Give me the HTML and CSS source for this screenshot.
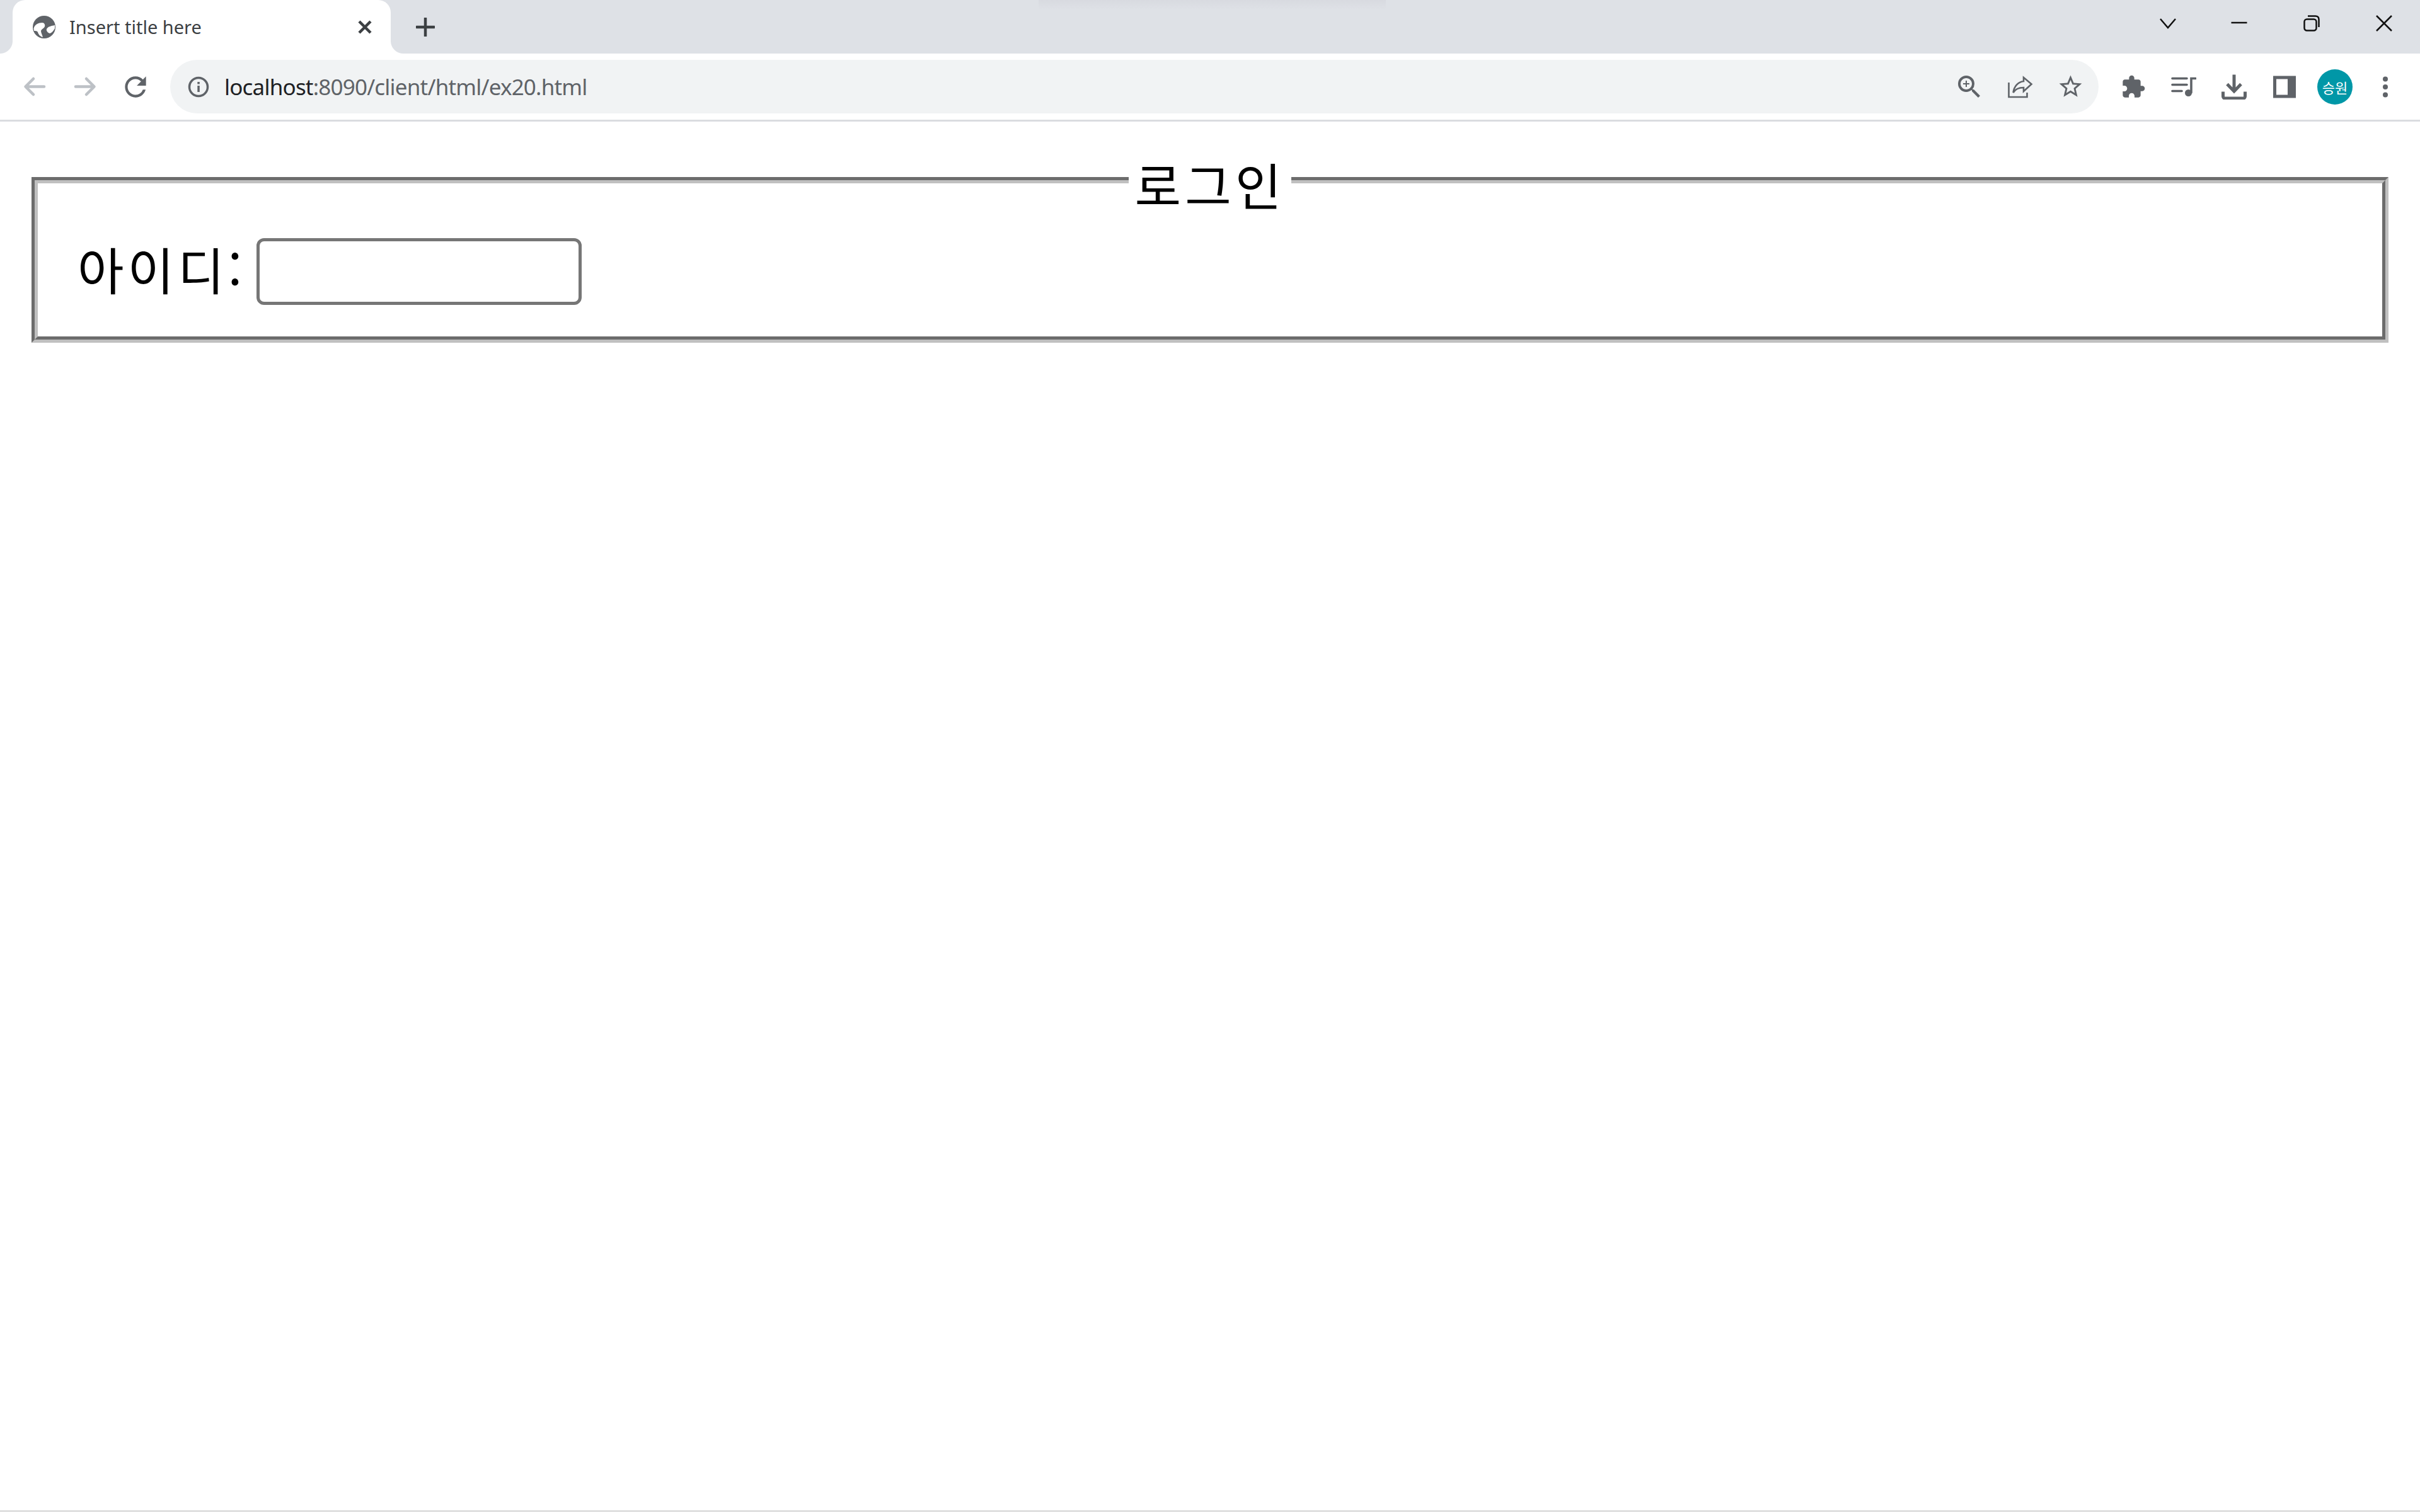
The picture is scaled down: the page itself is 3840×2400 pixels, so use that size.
FILE: index.html
```html
<!DOCTYPE html>
<html lang="ko">
<head>
    <meta charset="UTF-8">
    <meta name="viewport" content="width=device-width, initial-scale=1.0">
    <title>Insert title here</title>
    <link rel="stylesheet" href="styles.css">
</head>
<body>
    <div class="tabstrip">
        <div class="tab">
            <svg class="favicon" viewBox="0 0 36 36">
                <circle cx="18" cy="18" r="18" fill="#5f6368"/>
                <path fill="#fff" d="M1.500 20C3 14 9 11 15 11C18 11 20 14 19 17C18 20 14 21 13 24C13 27 15 30 16 34C12 33 9 30 8 26C7 24 4 24 2 24Z"/>
                <path fill="#fff" d="M35 15C30 16 24 17 22 21C21 24 24 27 27 28C30 27 33 24 35 20Z"/>
            </svg>
            <span class="tab-title">Insert title here</span>
            <svg class="tab-close" viewBox="0 0 24 24"><path d="M3 3L21 21M21 3L3 21"/></svg>
        </div>
        <svg class="new-tab" viewBox="0 0 30 30"><path d="M15 1V29M1 15H29"/></svg>
        <div class="window-controls">
            <div class="win-btn win-chevron"><svg viewBox="0 0 26 26"><path d="M1 6L13 20L25 6"/></svg></div>
            <div class="win-btn"><svg viewBox="0 0 26 26"><path d="M0.5 12H25.5"/></svg></div>
            <div class="win-btn"><svg viewBox="0 0 26 26"><rect x="1.5" y="6.5" width="19" height="18" rx="4"/><path d="M7 1.5H19Q24.500 1.500 24.500 7V19"/></svg></div>
            <div class="win-btn"><svg viewBox="0 0 26 26"><path d="M1 1L25 25M25 1L1 25"/></svg></div>
        </div>
    </div>

    <div class="toolbar">
        <div class="tool-btn"><svg class="icon-line faded" viewBox="0 0 40 40"><path d="M35 19.500H6M18 7L5.500 19.500L18 32"/></svg></div>
        <div class="tool-btn"><svg class="icon-line faded" viewBox="0 0 40 40"><path d="M5 19.500H34M22 7L34.500 19.500L22 32"/></svg></div>
        <div class="tool-btn">
            <svg class="icon-solid size-50" viewBox="0 0 24 24"><path d="M17.650 6.350A7.958 7.958 0 0 0 12 4c-4.420 0-7.990 3.580-7.990 8s3.570 8 7.990 8c3.730 0 6.840-2.550 7.730-6h-2.080A5.990 5.990 0 0 1 12 18c-3.310 0-6-2.690-6-6s2.690-6 6-6c1.660 0 3.140.690 4.220 1.780L13 11h7V4l-2.350 2.350z"/></svg>
        </div>

        <div class="omnibox">
            <svg class="info-icon" viewBox="0 0 36 36">
                <circle cx="18" cy="18" r="14.500" fill="none" stroke="#5f6368" stroke-width="3.500"/>
                <rect x="16.300" y="16" width="3.500" height="10" fill="#5f6368"/>
                <rect x="16.300" y="10" width="3.500" height="3.500" fill="#5f6368"/>
            </svg>
            <div class="url"><span class="url-host">localhost</span>:8090/client/html/ex20.html</div>
            <div class="tool-btn">
                <svg class="icon-solid size-48" viewBox="0 0 24 24"><path d="M15.500 14h-.790l-.280-.270A6.471 6.471 0 0 0 16 9.500 6.500 6.500 0 1 0 9.500 16c1.610 0 3.090-.590 4.230-1.570l.270.280v.790l5 4.990L20.490 19l-4.990-5zm-6 0C7.010 14 5 11.990 5 9.500S7.010 5 9.500 5 14 7.010 14 9.500 11.990 14 9.500 14z"/><path d="M12 10h-2v2H9v-2H7V9h2V7h1v2h2v1z"/></svg>
            </div>
            <div class="tool-btn">
                <svg class="icon-line thin" viewBox="0 0 42 40"><path d="M3.500 13V36H32.500V29"/><path d="M27 5L39.500 15.500L27 27V21C19 21 14 23 10.500 29C12 19 18 12 27 11Z"/></svg>
            </div>
            <div class="tool-btn">
                <svg class="icon-solid size-43" viewBox="0 0 24 24"><path d="M22 9.240l-7.190-.620L12 2 9.190 8.630 2 9.240l5.460 4.730L5.820 21 12 17.270 18.180 21l-1.630-7.030L22 9.240zM12 15.400l-3.760 2.270 1-4.280-3.320-2.880 4.380-.380L12 6.100l1.710 4.040 4.380.380-3.320 2.880 1 4.280L12 15.400z"/></svg>
            </div>
        </div>

        <div class="toolbar-right">
            <div class="tool-btn">
                <svg class="icon-solid size-40" viewBox="0 0 24 24"><path d="M20.500 11H19V7c0-1.100-.9-2-2-2h-4V3.500C13 2.120 11.880 1 10.500 1S8 2.120 8 3.500V5H4c-1.100 0-1.990.9-1.990 2v3.800H3.500c1.490 0 2.700 1.210 2.700 2.700s-1.210 2.700-2.700 2.700H2V20c0 1.100.9 2 2 2h3.800v-1.500c0-1.490 1.210-2.700 2.700-2.700 1.490 0 2.700 1.210 2.700 2.700V22H17c1.100 0 2-.9 2-2v-4h1.500c1.380 0 2.500-1.120 2.500-2.500S21.880 11 20.500 11z"/></svg>
            </div>
            <div class="tool-btn">
                <svg class="icon-line medium" viewBox="0 0 40 40">
                    <path d="M2 6.500H25M2 16.500H25M2 26.500H17"/>
                    <path d="M32 29V6.500H39"/>
                    <circle class="dot" cx="27.500" cy="29.500" r="5.500"/>
                </svg>
            </div>
            <div class="tool-btn">
                <svg class="icon-line bold" viewBox="0 0 40 40">
                    <path d="M20 0.500V26M9 15.500L20 27L31 15.500"/>
                    <path d="M2.500 27.500V35A3 3 0 0 0 5.500 38H34.500A3 3 0 0 0 37.500 35V27.500"/>
                </svg>
            </div>
            <div class="tool-btn">
                <svg class="icon-solid size-40" viewBox="0 0 40 40"><path fill-rule="evenodd" d="M2 2.500H38V37.500H2ZM7 7.500V32.500H25V7.500Z"/></svg>
            </div>
            <div class="tool-btn"><div class="avatar">승원</div></div>
            <div class="tool-btn">
                <svg class="icon-solid size-40" viewBox="0 0 40 40"><circle cx="20" cy="7.500" r="4"/><circle cx="20" cy="20" r="4"/><circle cx="20" cy="32.500" r="4"/></svg>
            </div>
        </div>
    </div>

    <div class="page">
        <fieldset class="login-box">
            <legend class="login-title">로그인</legend>
            <div class="login-row">
                <label class="login-label" for="userId">아이디:</label>
                <input class="login-input" id="userId" type="text">
            </div>
        </fieldset>
    </div>
</body>
</html>
```

FILE: styles.css
```css
html, body {
    height: 100%;
}
body {
    margin: 0;
    display: flex;
    flex-direction: column;
    background-color: #FFFFFF;
    color: #000;
    font-family: "Noto Sans", "Noto Sans CJK KR", sans-serif;
}

/* tab strip */
.tabstrip {
    display: flex;
    align-items: center;
    height: 85px;
    flex-shrink: 0;
    background: linear-gradient(#d8dae0, #dee1e6) 1648px 0 / 551px 15px no-repeat, #dee1e6;
}
.tab {
    position: relative;
    display: flex;
    align-items: center;
    box-sizing: border-box;
    width: 600px;
    height: 85px;
    margin-left: 20px;
    padding: 0 29px 0 32px;
    background-color: #FFF;
    border-radius: 20px 20px 0 0;
}
.tab::before, .tab::after {
    content: "";
    position: absolute;
    bottom: 0;
    width: 20px;
    height: 20px;
}
.tab::before {
    left: -20px;
    background: radial-gradient(circle at 0 0, transparent 19.5px, #FFF 20.5px);
}
.tab::after {
    right: -20px;
    background: radial-gradient(circle at 100% 0, transparent 19.5px, #FFF 20.5px);
}
.favicon {
    width: 36px;
    height: 36px;
    flex-shrink: 0;
}
.tab-title {
    flex: 1;
    margin-left: 22px;
    font-size: 29px;
    color: #3c4043;
}
.tab-close {
    width: 24px;
    height: 24px;
    fill: none;
    stroke: #3c4043;
    stroke-width: 4.5;
}
.new-tab {
    width: 30px;
    height: 30px;
    margin-left: 40px;
    fill: none;
    stroke: #3c4043;
    stroke-width: 4.5;
    stroke-linecap: round;
}
.window-controls {
    display: flex;
    align-self: flex-start;
    height: 73px;
    margin-left: auto;
}
.win-btn {
    display: flex;
    align-items: center;
    justify-content: center;
    width: 115px;
}
.win-chevron {
    width: 111px;
}
.win-btn svg {
    width: 26px;
    height: 26px;
    fill: none;
    stroke: #111;
    stroke-width: 2.5;
}

/* toolbar */
.toolbar {
    display: flex;
    align-items: center;
    flex-shrink: 0;
    height: 105px;
    padding-left: 15px;
    background-color: #FFF;
    border-bottom: 3px solid #dadce0;
}
.tool-btn {
    display: flex;
    align-items: center;
    justify-content: center;
    width: 80px;
    height: 80px;
    flex-shrink: 0;
}
.icon-solid {
    fill: #5f6368;
}
.size-50 { width: 50px; height: 50px; }
.size-48 { width: 48px; height: 48px; }
.size-43 { width: 43px; height: 43px; }
.size-40 { width: 40px; height: 40px; }
.icon-line {
    width: 40px;
    height: 40px;
    fill: none;
    stroke: #5f6368;
}
.icon-line.faded {
    stroke: #bdc1c6;
    stroke-width: 4.5;
    stroke-linecap: round;
    stroke-linejoin: round;
}
.icon-line.thin {
    width: 42px;
    stroke-width: 2.6;
}
.icon-line.medium {
    stroke-width: 3.6;
    stroke-linecap: round;
}
.icon-line.bold {
    stroke-width: 5;
}
.icon-line .dot {
    fill: #5f6368;
    stroke: none;
}
.omnibox {
    display: flex;
    align-items: center;
    box-sizing: border-box;
    width: 3060px;
    height: 85px;
    margin-left: 15px;
    padding: 0 5px 0 27px;
    background-color: #f1f3f4;
    border-radius: 42.5px;
}
.info-icon {
    width: 36px;
    height: 36px;
    flex-shrink: 0;
}
.url {
    flex: 1;
    margin-left: 23px;
    font-size: 35px;
    letter-spacing: -0.8px;
    color: #5f6368;
}
.url-host {
    color: #202124;
}
.toolbar-right {
    display: flex;
    align-items: center;
    margin-left: 15px;
}
.avatar {
    display: flex;
    align-items: center;
    justify-content: center;
    width: 56px;
    height: 56px;
    border-radius: 50%;
    background-color: #0097a7;
    color: #FFF;
    font-family: "Noto Sans CJK KR", sans-serif;
    font-size: 22px;
}

/* page */
.page {
    flex: 1;
    padding: 40px 40px 0;
    background-color: #FFF;
    border-bottom: 3px solid #e0e0e0;
    font-family: "Noto Sans CJK KR", sans-serif;
    font-size: 80px;
    line-height: 106px;
}
.login-box {
    margin: 0 10px;
    padding: 28px 60px 50px;
    border: 10px groove #c0c0c0;
}
.login-title {
    margin: 0 auto;
    padding: 10px 10px 0;
    line-height: 96px;
    letter-spacing: 6px;
}
.login-row {
    display: flex;
    align-items: flex-end;
    height: 117px;
}
.login-label {
    margin: 0 17px 6px 3px;
    letter-spacing: 6px;
}
.login-input {
    box-sizing: border-box;
    width: 516px;
    height: 106px;
    padding: 5px 10px;
    border: 5px solid #767676;
    border-radius: 12px;
    background-color: #FFF;
}
```
